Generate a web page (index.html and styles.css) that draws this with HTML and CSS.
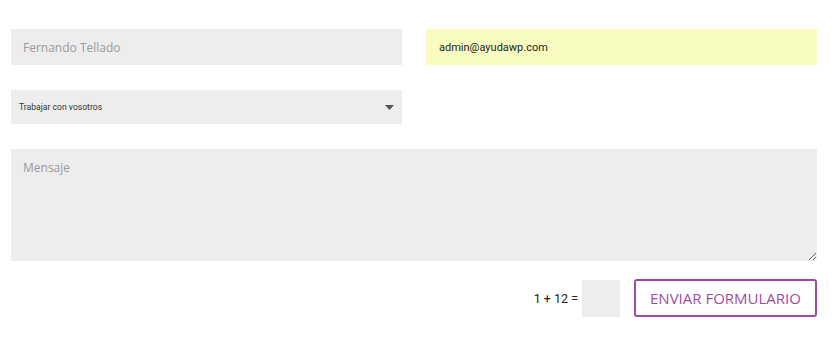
FILE: index.html
```html
<!DOCTYPE html>
<html lang="es">
<head>
<meta charset="utf-8">
<title>Formulario</title>
<link rel="stylesheet" href="styles.css">
</head>
<body>
<form class="form">
  <div class="row two">
    <input class="field" type="text" placeholder="Fernando Tellado">
    <input class="field autofill" type="email" value="admin@ayudawp.com">
  </div>
  <div class="row two">
    <div class="select">
      <span class="select-text">Trabajar con vosotros</span>
      <svg class="caret" width="9" height="5" viewBox="0 0 9 5"><path d="M0 0H9L4.5 5Z" fill="#555"/></svg>
    </div>
  </div>
  <textarea class="message" placeholder="Mensaje"></textarea>
  <div class="submit-row">
    <span class="captcha-label">1 + 12 =</span>
    <input class="captcha" type="text">
    <button class="send" type="button">ENVIAR FORMULARIO</button>
  </div>
</form>
</body>
</html>
```
FILE: styles.css
```css
html, body {
  margin: 0;
  padding: 0;
  background: #fff;
}
.form {
  width: 806px;
  margin-left: 11px;
  padding-top: 29px;
  display: flex;
  flex-direction: column;
}
.row.two {
  display: grid;
  grid-template-columns: 391px 391px;
  column-gap: 24px;
  margin-bottom: 25px;
}
.field {
  box-sizing: border-box;
  height: 36px;
  border: 0;
  outline: 0;
  background: #ededed;
  padding: 0 12px;
  font-family: "Open Sans", sans-serif;
  font-size: 12px;
  color: #222;
}
.field::placeholder {
  color: #9a9a9a;
}
.field.autofill {
  background: #f8fcc0;
  font-family: Roboto, "Noto Sans", sans-serif;
  font-size: 11px;
  color: #1e1e1e;
  padding-left: 13px;
}
.select {
  box-sizing: border-box;
  height: 34px;
  background: #ededed;
  display: flex;
  align-items: center;
  justify-content: space-between;
  padding: 0 8px 0 8px;
}
.select-text {
  font-family: Roboto, "Noto Sans", sans-serif;
  font-size: 8.6px;
  color: #333;
}
.caret {
  display: block;
  margin-right: 0;
}
.message {
  box-sizing: border-box;
  width: 806px;
  height: 112px;
  border: 0;
  outline: 0;
  background: #ededed;
  padding: 10px 12px;
  font-family: "Open Sans", sans-serif;
  font-size: 12px;
  resize: both;
  display: block;
  margin: 0;
}
.message::placeholder {
  color: #9a9a9a;
}
.submit-row {
  display: flex;
  justify-content: flex-end;
  align-items: center;
  margin-top: 18px;
}
.captcha-label {
  font-family: Roboto, "Noto Sans", sans-serif;
  font-size: 12.5px;
  color: #222;
  margin-right: 4px;
}
.captcha {
  box-sizing: border-box;
  width: 38px;
  height: 37px;
  border: 0;
  outline: 0;
  background: #ededed;
  margin: 0 14px 0 0;
}
.send {
  box-sizing: border-box;
  width: 183px;
  height: 38px;
  background: #fff;
  border: 2px solid #9c4d9f;
  border-radius: 3px;
  color: #9c4d9f;
  font-family: "Open Sans", sans-serif;
  font-size: 15px;
  padding: 0;
  cursor: pointer;
}
```
